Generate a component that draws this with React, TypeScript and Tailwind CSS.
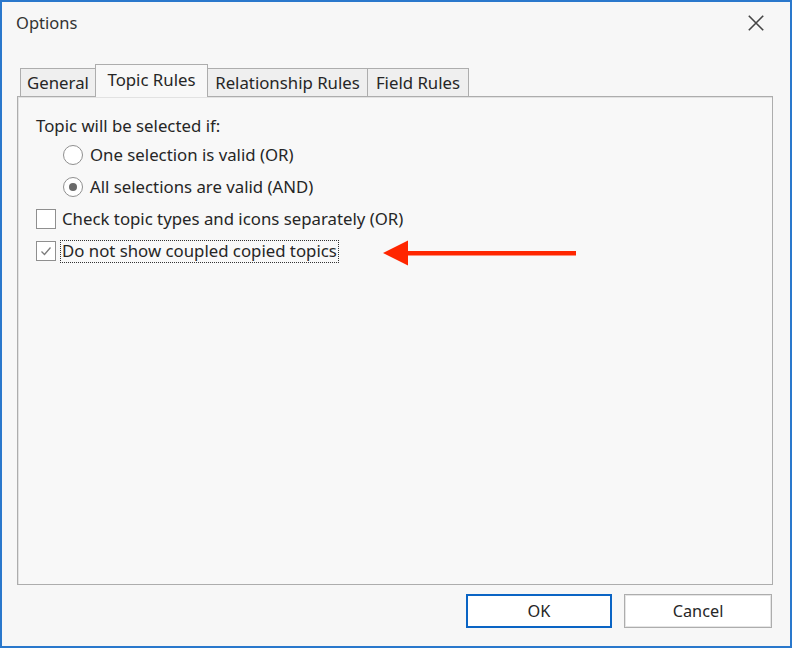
const font = { fontFamily: '"Noto Sans", "Open Sans", sans-serif' };

function Tab({ label, width, active }: { label: string; width: string; active?: boolean }) {
  if (active) {
    return (
      <div
        className={`relative z-10 -mb-px -ml-px flex h-[33px] items-center justify-center border border-b-0 border-[#adadad] bg-[#f8f8f8] pb-[2px] text-[#262626] ${width}`}
      >
        {label}
      </div>
    );
  }
  return (
    <div
      className={`-ml-px flex h-[28px] items-center justify-center border border-b-0 border-[#adadad] bg-[#efefef] text-[#262626] first:ml-0 ${width}`}
    >
      {label}
    </div>
  );
}

function Radio({ label, checked }: { label: string; checked?: boolean }) {
  return (
    <div className="flex h-[32px] items-center pl-[27px]">
      <span className="flex h-[20px] w-[20px] items-center justify-center rounded-full border border-[#8f8f8f] bg-white">
        {checked && <span className="h-[8px] w-[8px] rounded-full bg-[#6a6a6a]" />}
      </span>
      <span className="ml-[7px]">{label}</span>
    </div>
  );
}

function Check({ checked }: { checked?: boolean }) {
  return (
    <div className="flex h-[20px] w-[20px] shrink-0 items-center justify-center border border-[#8f8f8f] bg-white">
      {checked && (
        <svg width="14" height="14" viewBox="0 0 14 14">
          <path d="M2.5 7.5 L5.5 10.5 L11.5 3.5" fill="none" stroke="#7c7c7c" strokeWidth="1.3" />
        </svg>
      )}
    </div>
  );
}

export default function App() {
  return (
    <div
      className="flex h-[648px] w-[792px] flex-col border-2 border-[#2a78cc] bg-[#f7f7f7] text-[16.8px] text-[#262626]"
      style={font}
    >
      <div className="flex h-[42px] shrink-0 items-center justify-between pl-[14px] pr-[26px]">
        <span className="text-[16.5px] text-[#333]">Options</span>
        <svg width="16" height="16" viewBox="0 0 16 16">
          <path d="M0.8 0.8 L15.2 15.2 M15.2 0.8 L0.8 15.2" stroke="#454545" strokeWidth="1.6" />
        </svg>
      </div>

      <div className="mt-[20px] flex h-[32px] shrink-0 items-end pl-[18px]">
        <Tab label="General" width="w-[76px]" />
        <Tab label="Topic Rules" width="w-[113px]" active />
        <Tab label="Relationship Rules" width="w-[161px]" />
        <Tab label="Field Rules" width="w-[102px]" />
      </div>

      <div className="mx-[15px] mr-[17px] flex flex-1 flex-col border border-[#adadad] bg-[#f8f8f8] pl-[18px] pt-[16px] shadow-[inset_1px_1px_0_#e2e2e2]">
        <div className="flex h-[26px] items-center">Topic will be selected if:</div>
        <Radio label="One selection is valid (OR)" />
        <Radio label="All selections are valid (AND)" checked />
        <div className="flex h-[32px] items-center">
          <Check />
          <span className="ml-[6px]">Check topic types and icons separately (OR)</span>
        </div>
        <div className="flex h-[32px] items-center">
          <Check checked />
          <span className="ml-[4px] flex h-[23px] items-center border border-dotted border-[#333] px-[1px]">
            Do not show coupled copied topics
          </span>
          <svg width="195" height="26" viewBox="0 0 195 26" className="ml-[44px] mt-[4px] shrink-0">
            <path d="M0 13 L25 0.5 L25 25.5 Z" fill="#ff2600" />
            <rect x="22" y="11" width="171" height="4.5" fill="#ff2600" />
          </svg>
        </div>
      </div>

      <div className="flex shrink-0 justify-end gap-[12px] pb-[18px] pr-[18px] pt-[9px] text-[16.3px]">
        <button className="h-[34px] w-[146px] border-2 border-[#0a64c4] bg-white text-[#262626]">OK</button>
        <button className="h-[34px] w-[148px] border border-[#adadad] bg-white text-[#262626] shadow-[inset_0_0_0_1px_#e5e5e5]">
          Cancel
        </button>
      </div>
    </div>
  );
}
